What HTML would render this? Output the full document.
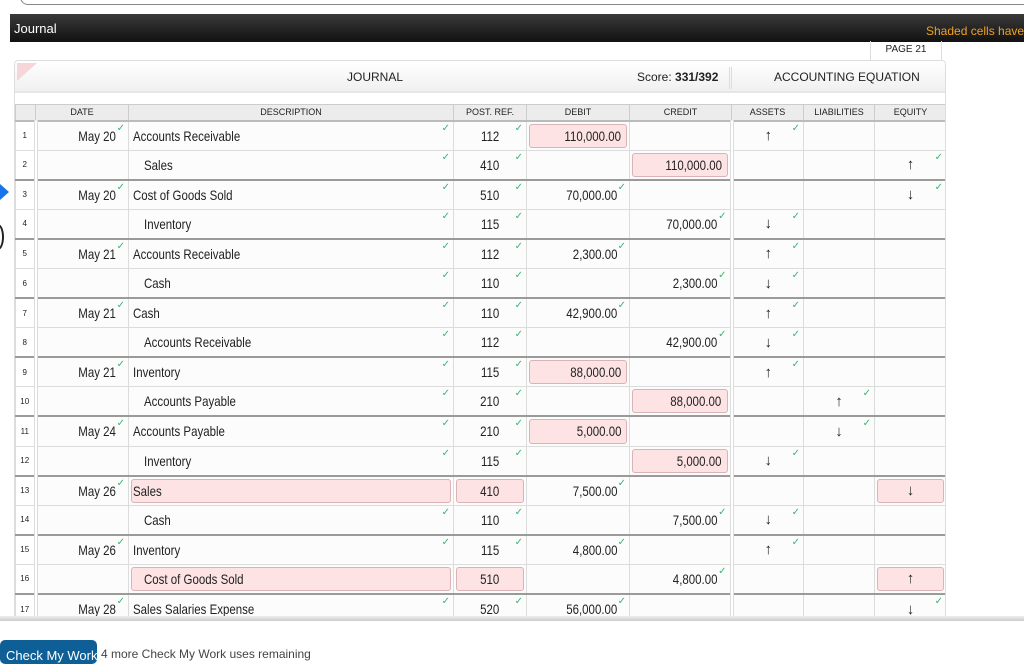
<!DOCTYPE html>
<html><head><meta charset="utf-8"><style>
*{margin:0;padding:0;box-sizing:border-box}
body{width:1024px;height:656px;overflow:hidden;background:#fff;font-family:"Liberation Sans",sans-serif;position:relative;color:#222}
i{font-style:normal}
.x{display:inline-block;transform:scaleX(.82);transform-origin:left center;white-space:nowrap}
.r .x{transform-origin:right center}
.c .x{transform-origin:center center}
.topbox{position:absolute;left:20px;top:-10px;width:1020px;height:15px;border:1px solid #888;border-radius:0 0 0 8px;border-top:none}
.bar{position:absolute;left:10px;top:14px;width:1014px;height:28px;background:linear-gradient(#3a3a3a,#111);}
.bar .t{position:absolute;left:4px;top:7px;color:#fff;font:13px "Liberation Sans",sans-serif}
.bar .s{position:absolute;left:916px;top:10px;color:#f0a020;font:12px "Liberation Sans",sans-serif;white-space:nowrap}
.page{position:absolute;left:870px;top:41px;width:72px;height:20px;border-left:1px solid #ddd;border-right:1px solid #ddd;font-size:10px;text-align:center;line-height:18px}
.panel{position:absolute;left:14px;top:60px;width:932px;height:560px;border:1px solid #ddd;border-radius:4px 4px 0 0;overflow:hidden;background:#fff}
.title{position:absolute;left:0;top:0;width:932px;height:32px;background:linear-gradient(#fff,#f0f0f0);border-bottom:2px solid #e6e6e6;font-size:12px;line-height:32px}
.tri{position:absolute;left:2px;top:2px;width:0;height:0;border-top:18px solid #f6d6d8;border-right:20px solid transparent}
table{position:absolute;left:0;top:43px;border-collapse:collapse;table-layout:fixed;width:931px}
th{height:16px;font-size:9px;font-weight:normal;background:#ececec;border:1px solid #ccc;border-bottom:2px solid #bbb;padding:0}
td{height:29.6px;border:1px solid #dcdcdc;font-size:14px;position:relative;background:#fcfcfc;padding:0 4px}
tr.o td{border-top:2px solid #9a9a9a}
td.n{font-size:8px;text-align:center;background:#fff;border-right:4px double #ddd;padding:0}
td.r{text-align:right}
td.c{text-align:center}
td.a{text-align:center;font-size:15px}
td.sep{border-left:4px double #ddd}
.ck{position:absolute;right:3px;top:2px;color:#3cb371;font-size:10px;line-height:10px}
.sh{position:absolute;left:2px;right:2px;top:2px;bottom:2px;background:#fde3e4;border:1px solid #d9b3b5;border-radius:3px}
.v{position:relative}
.ind{padding-left:15px}
.btm{position:absolute;left:0;top:616px;width:1024px;height:5px;background:linear-gradient(#eee,#ccc)}
.btn{position:absolute;left:0;top:640px;width:97px;height:24px;background:#0e5f96;border-radius:5px;color:#fff;font:13px "Liberation Sans",sans-serif;padding:8px 6px;white-space:nowrap;overflow:hidden}
.rem{position:absolute;left:101px;top:647px;font:12px "Liberation Sans",sans-serif;color:#444;white-space:nowrap}
.arr{position:absolute;left:0;top:184px;width:0;height:0;border-top:8px solid transparent;border-bottom:8px solid transparent;border-left:9px solid #1a73e8}
.par{position:absolute;left:-8px;top:224px;width:12px;height:26px;border:2px solid #222;border-radius:50%}
</style></head><body>
<div class="topbox"></div>
<div class="bar"><span class="t">Journal</span><span class="s">Shaded cells have</span></div>
<div class="page">PAGE 21</div>
<div class="arr"></div><div class="par"></div>
<div class="panel">
<div class="title"><div class="tri"></div>
<span style="position:absolute;left:332px">JOURNAL</span>
<span style="position:absolute;left:622px">Score: <b>331/392</b></span>
<span style="position:absolute;left:714px;top:6px;height:22px;border-left:3px double #ddd"></span>
<span style="position:absolute;left:759px">ACCOUNTING EQUATION</span></div>
<table>
<colgroup><col style="width:20px"><col style="width:93px"><col style="width:325px"><col style="width:73px"><col style="width:103px"><col style="width:102px"><col style="width:72px"><col style="width:71px"><col style="width:72px"></colgroup>
<tr><th></th><th>DATE</th><th>DESCRIPTION</th><th>POST. REF.</th><th>DEBIT</th><th>CREDIT</th><th class="sep">ASSETS</th><th>LIABILITIES</th><th>EQUITY</th></tr>
<tr class="o"><td class="n">1</td><td class="r"><i class="x">May 20</i> &nbsp;<span class="ck">✓</span></td><td><i class="x">Accounts Receivable</i><span class="ck">✓</span></td><td class="c"><i class="x">112</i><span class="ck">✓</span></td><td class="r"><div class="sh"></div><i class="x v">110,000.00</i>&nbsp;</td><td></td><td class="a sep">↑<span class="ck">✓</span></td><td></td><td></td></tr>
<tr><td class="n">2</td><td></td><td class="ind"><i class="x">Sales</i><span class="ck">✓</span></td><td class="c"><i class="x">410</i><span class="ck">✓</span></td><td></td><td class="r"><div class="sh"></div><i class="x v">110,000.00</i>&nbsp;</td><td class="sep"></td><td></td><td class="a">↑<span class="ck">✓</span></td></tr>
<tr class="o"><td class="n">3</td><td class="r"><i class="x">May 20</i> &nbsp;<span class="ck">✓</span></td><td><i class="x">Cost of Goods Sold</i><span class="ck">✓</span></td><td class="c"><i class="x">510</i><span class="ck">✓</span></td><td class="r"><i class="x">70,000.00</i> &nbsp;<span class="ck">✓</span></td><td></td><td class="sep"></td><td></td><td class="a">↓<span class="ck">✓</span></td></tr>
<tr><td class="n">4</td><td></td><td class="ind"><i class="x">Inventory</i><span class="ck">✓</span></td><td class="c"><i class="x">115</i><span class="ck">✓</span></td><td></td><td class="r"><i class="x">70,000.00</i> &nbsp;<span class="ck">✓</span></td><td class="a sep">↓<span class="ck">✓</span></td><td></td><td></td></tr>
<tr class="o"><td class="n">5</td><td class="r"><i class="x">May 21</i> &nbsp;<span class="ck">✓</span></td><td><i class="x">Accounts Receivable</i><span class="ck">✓</span></td><td class="c"><i class="x">112</i><span class="ck">✓</span></td><td class="r"><i class="x">2,300.00</i> &nbsp;<span class="ck">✓</span></td><td></td><td class="a sep">↑<span class="ck">✓</span></td><td></td><td></td></tr>
<tr><td class="n">6</td><td></td><td class="ind"><i class="x">Cash</i><span class="ck">✓</span></td><td class="c"><i class="x">110</i><span class="ck">✓</span></td><td></td><td class="r"><i class="x">2,300.00</i> &nbsp;<span class="ck">✓</span></td><td class="a sep">↓<span class="ck">✓</span></td><td></td><td></td></tr>
<tr class="o"><td class="n">7</td><td class="r"><i class="x">May 21</i> &nbsp;<span class="ck">✓</span></td><td><i class="x">Cash</i><span class="ck">✓</span></td><td class="c"><i class="x">110</i><span class="ck">✓</span></td><td class="r"><i class="x">42,900.00</i> &nbsp;<span class="ck">✓</span></td><td></td><td class="a sep">↑<span class="ck">✓</span></td><td></td><td></td></tr>
<tr><td class="n">8</td><td></td><td class="ind"><i class="x">Accounts Receivable</i><span class="ck">✓</span></td><td class="c"><i class="x">112</i><span class="ck">✓</span></td><td></td><td class="r"><i class="x">42,900.00</i> &nbsp;<span class="ck">✓</span></td><td class="a sep">↓<span class="ck">✓</span></td><td></td><td></td></tr>
<tr class="o"><td class="n">9</td><td class="r"><i class="x">May 21</i> &nbsp;<span class="ck">✓</span></td><td><i class="x">Inventory</i><span class="ck">✓</span></td><td class="c"><i class="x">115</i><span class="ck">✓</span></td><td class="r"><div class="sh"></div><i class="x v">88,000.00</i>&nbsp;</td><td></td><td class="a sep">↑<span class="ck">✓</span></td><td></td><td></td></tr>
<tr><td class="n">10</td><td></td><td class="ind"><i class="x">Accounts Payable</i><span class="ck">✓</span></td><td class="c"><i class="x">210</i><span class="ck">✓</span></td><td></td><td class="r"><div class="sh"></div><i class="x v">88,000.00</i>&nbsp;</td><td class="sep"></td><td class="a">↑<span class="ck">✓</span></td><td></td></tr>
<tr class="o"><td class="n">11</td><td class="r"><i class="x">May 24</i> &nbsp;<span class="ck">✓</span></td><td><i class="x">Accounts Payable</i><span class="ck">✓</span></td><td class="c"><i class="x">210</i><span class="ck">✓</span></td><td class="r"><div class="sh"></div><i class="x v">5,000.00</i>&nbsp;</td><td></td><td class="sep"></td><td class="a">↓<span class="ck">✓</span></td><td></td></tr>
<tr><td class="n">12</td><td></td><td class="ind"><i class="x">Inventory</i><span class="ck">✓</span></td><td class="c"><i class="x">115</i><span class="ck">✓</span></td><td></td><td class="r"><div class="sh"></div><i class="x v">5,000.00</i>&nbsp;</td><td class="a sep">↓<span class="ck">✓</span></td><td></td><td></td></tr>
<tr class="o"><td class="n">13</td><td class="r"><i class="x">May 26</i> &nbsp;<span class="ck">✓</span></td><td><div class="sh"></div><i class="x v">Sales</i></td><td class="c"><div class="sh"></div><i class="x v">410</i></td><td class="r"><i class="x">7,500.00</i> &nbsp;<span class="ck">✓</span></td><td></td><td class="sep"></td><td></td><td class="a"><div class="sh"></div><span class="v">↓</span></td></tr>
<tr><td class="n">14</td><td></td><td class="ind"><i class="x">Cash</i><span class="ck">✓</span></td><td class="c"><i class="x">110</i><span class="ck">✓</span></td><td></td><td class="r"><i class="x">7,500.00</i> &nbsp;<span class="ck">✓</span></td><td class="a sep">↓<span class="ck">✓</span></td><td></td><td></td></tr>
<tr class="o"><td class="n">15</td><td class="r"><i class="x">May 26</i> &nbsp;<span class="ck">✓</span></td><td><i class="x">Inventory</i><span class="ck">✓</span></td><td class="c"><i class="x">115</i><span class="ck">✓</span></td><td class="r"><i class="x">4,800.00</i> &nbsp;<span class="ck">✓</span></td><td></td><td class="a sep">↑<span class="ck">✓</span></td><td></td><td></td></tr>
<tr><td class="n">16</td><td></td><td class="ind"><div class="sh"></div><i class="x v">Cost of Goods Sold</i></td><td class="c"><div class="sh"></div><i class="x v">510</i></td><td></td><td class="r"><i class="x">4,800.00</i> &nbsp;<span class="ck">✓</span></td><td class="sep"></td><td></td><td class="a"><div class="sh"></div><span class="v">↑</span></td></tr>
<tr class="o"><td class="n">17</td><td class="r"><i class="x">May 28</i> &nbsp;<span class="ck">✓</span></td><td><i class="x">Sales Salaries Expense</i><span class="ck">✓</span></td><td class="c"><i class="x">520</i><span class="ck">✓</span></td><td class="r"><i class="x">56,000.00</i> &nbsp;<span class="ck">✓</span></td><td></td><td class="sep"></td><td></td><td class="a">↓<span class="ck">✓</span></td></tr>
</table>
</div>
<div class="btm"></div>
<div class="btn">Check My Work</div>
<div class="rem">4 more Check My Work uses remaining</div>
</body></html>
